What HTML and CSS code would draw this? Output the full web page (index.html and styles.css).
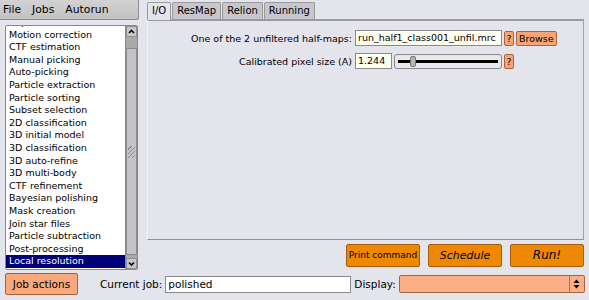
FILE: index.html
```html
<!DOCTYPE html>
<html lang="en">
<head>
    <meta charset="UTF-8">
    <title>RELION</title>
    <link rel="stylesheet" href="styles.css">
</head>
<body>
    <div class="main">
        <div class="left">
            <div class="menubar">
                <span class="menu-item">File</span>
                <span class="menu-item">Jobs</span>
                <span class="menu-item">Autorun</span>
            </div>
            <div class="browser">
                <div class="browser-list">
                    <div class="job">Import</div>
                    <div class="job">Motion correction</div>
                    <div class="job">CTF estimation</div>
                    <div class="job">Manual picking</div>
                    <div class="job">Auto-picking</div>
                    <div class="job">Particle extraction</div>
                    <div class="job">Particle sorting</div>
                    <div class="job">Subset selection</div>
                    <div class="job">2D classification</div>
                    <div class="job">3D initial model</div>
                    <div class="job">3D classification</div>
                    <div class="job">3D auto-refine</div>
                    <div class="job">3D multi-body</div>
                    <div class="job">CTF refinement</div>
                    <div class="job">Bayesian polishing</div>
                    <div class="job">Mask creation</div>
                    <div class="job">Join star files</div>
                    <div class="job">Particle subtraction</div>
                    <div class="job">Post-processing</div>
                    <div class="job selected">Local resolution</div>
                </div>
                <div class="scrollbar">
                    <div class="arrow">
                        <svg width="9" height="9" viewBox="0 0 9 9"><polyline points="2,6 4.5,3.5 7,6" fill="none" stroke="#000" stroke-width="1.6"/></svg>
                    </div>
                    <div class="track">
                        <div class="thumb"><span class="grip"></span></div>
                    </div>
                    <div class="arrow">
                        <svg width="9" height="9" viewBox="0 0 9 9"><polyline points="2,3.5 4.5,6 7,3.5" fill="none" stroke="#000" stroke-width="1.6"/></svg>
                    </div>
                </div>
            </div>
        </div>
        <div class="right">
            <div class="tabs">
                <span class="tab active">I/O</span>
                <span class="tab">ResMap</span>
                <span class="tab">Relion</span>
                <span class="tab">Running</span>
            </div>
            <div class="panel">
                <div class="row">
                    <span class="label">One of the 2 unfiltered half-maps:</span>
                    <span class="input file">run_half1_class001_unfil.mrc</span>
                    <span class="help">?</span>
                    <span class="small-btn">Browse</span>
                </div>
                <div class="row">
                    <span class="label">Calibrated pixel size (A)</span>
                    <span class="input num">1.244</span>
                    <span class="slider"><span class="line"></span><span class="knob"></span></span>
                    <span class="help">?</span>
                </div>
            </div>
            <div class="actions">
                <span class="big-btn print">Print command</span>
                <span class="big-btn italic">Schedule</span>
                <span class="big-btn italic run">Run!</span>
            </div>
        </div>
    </div>
    <div class="bottom">
        <span class="job-actions">Job actions</span>
        <span class="bottom-label">Current job:</span>
        <span class="input current">polished</span>
        <span class="bottom-label display">Display:</span>
        <span class="choice">
            <span class="updown">
                <svg width="7" height="10" viewBox="0 0 7 10"><polygon points="0.5,4 3.5,0.5 6.5,4" fill="#000"/><polygon points="0.5,6 3.5,9.5 6.5,6" fill="#000"/></svg>
            </span>
        </span>
    </div>
</body>
</html>
```

FILE: styles.css
```css
body {
    margin: 0;
    width: 589px;
    height: 300px;
    overflow: hidden;
    background-color: #e4e4ec;
    font-family: "DejaVu Sans", sans-serif;
    font-size: 9.5px;
    color: #000000;
}
.main {
    display: flex;
    height: 271px;
}
.left {
    width: 147px;
    display: flex;
    flex-direction: column;
}
.menubar {
    height: 20px;
    width: 139px;
    box-sizing: border-box;
    display: flex;
    align-items: center;
    gap: 11px;
    padding-left: 3px;
    background: linear-gradient(#d2d2d2, #c2c2c2);
    border-right: 1px solid #8c8c8c;
    border-bottom: 1px solid #8c8c8c;
    border-bottom-right-radius: 3px;
    font-size: 10.8px;
}
.browser {
    margin: 5px 0 0 5px;
    width: 133px;
    height: 245px;
    box-sizing: border-box;
    border: 1px solid #8a8a8a;
    border-radius: 2px;
    background-color: #ffffff;
    display: flex;
    overflow: hidden;
}
.browser-list {
    flex: 1;
    padding-top: 1px;
    margin-top: -11px;
}
.job {
    height: 12.6px;
    line-height: 12.6px;
    padding-left: 3px;
    white-space: nowrap;
}
.job.selected {
    background-color: #000078;
    color: #ffffff;
    margin-right: -12px;
}
.scrollbar {
    width: 11px;
    display: flex;
    flex-direction: column;
    background-color: #a9a9ad;
    border-left: 1px solid #8a8a8a;
    position: relative;
    z-index: 1;
}
.arrow {
    height: 11px;
    background-color: #c8c8cc;
    border: 1px solid #909090;
    box-sizing: border-box;
    display: flex;
    align-items: center;
    justify-content: center;
}
.track {
    flex: 1;
    padding-top: 11px;
    padding-bottom: 3px;
    display: flex;
}
.thumb {
    flex: 1;
    background-color: #c4c4c8;
    border: 1px solid #8a8a8a;
    display: flex;
    align-items: center;
    justify-content: center;
}
.grip {
    width: 7px;
    height: 12px;
    background: repeating-linear-gradient(135deg, transparent 0 2px, #8c8c8c 2px 3px);
}
.right {
    flex: 1;
    display: flex;
    flex-direction: column;
    padding-right: 5px;
}
.tabs {
    display: flex;
    margin-top: 2px;
    height: 17px;
}
.tab {
    padding: 0 4px;
    line-height: 16px;
    font-size: 10px;
    background-color: #c6c6cc;
    border: 1px solid #9a9a9a;
    border-bottom: none;
    border-radius: 2px 2px 0 0;
    margin-right: 1px;
}
.tab.active {
    background-color: #e4e4ec;
    height: 17px;
    position: relative;
    z-index: 1;
}
.panel {
    height: 221px;
    box-sizing: border-box;
    border: 1px solid #a0a0a8;
    border-top: 2px solid #9a9a9e;
    border-left-color: #f4f4f8;
    border-bottom-color: #8e8e96;
    display: flex;
    flex-direction: column;
    gap: 7px;
    padding-top: 9px;
}
.row {
    display: flex;
    align-items: center;
    height: 16px;
}
.label {
    width: 204px;
    text-align: right;
    padding-right: 3px;
}
.input {
    box-sizing: border-box;
    height: 16px;
    line-height: 14px;
    border: 1px solid #8a8a8a;
    background-color: #fffff0;
    padding-left: 2px;
    white-space: nowrap;
    overflow: hidden;
}
.file {
    width: 147px;
}
.num {
    width: 37px;
}
.help {
    width: 10px;
    height: 15px;
    box-sizing: border-box;
    margin-left: 2px;
    background-color: #f7a477;
    border: 1px solid #a8643c;
    border-radius: 2px;
    text-align: center;
    line-height: 13px;
}
.small-btn {
    height: 15px;
    box-sizing: border-box;
    margin-left: 2px;
    padding: 0 2px;
    background-color: #f7a477;
    border: 1px solid #a8643c;
    border-radius: 2px;
    line-height: 13px;
}
.slider {
    position: relative;
    width: 108px;
    height: 15px;
    margin-left: 2px;
    box-sizing: border-box;
    border: 1px solid #8a8a8a;
    border-radius: 3px;
    background-color: #e8e8ee;
}
.line {
    position: absolute;
    left: 3px;
    right: 3px;
    top: 5px;
    height: 3px;
    background-color: #000000;
}
.knob {
    position: absolute;
    left: 15px;
    top: 1px;
    width: 6px;
    height: 11px;
    box-sizing: border-box;
    background-color: #b4b4b8;
    border: 1px solid #777777;
    border-radius: 2px;
}
.actions {
    display: flex;
    justify-content: flex-end;
    gap: 8px;
    margin-top: 4px;
}
.big-btn {
    width: 74px;
    height: 23px;
    box-sizing: border-box;
    background-color: #ee8800;
    border: 1px solid #a85c10;
    border-radius: 2px;
    text-align: center;
    line-height: 21px;
    font-size: 11px;
}
.print {
    font-size: 9px;
}
.italic {
    font-style: italic;
}
.run {
    font-size: 12px;
}
.bottom {
    display: flex;
    align-items: center;
    height: 26px;
}
.job-actions {
    margin-left: 5px;
    width: 73px;
    height: 22px;
    box-sizing: border-box;
    background-color: #f8a87a;
    border: 1px solid #a8643c;
    border-radius: 2px;
    text-align: center;
    line-height: 20px;
    font-size: 10.5px;
}
.bottom-label {
    margin-left: 22px;
    margin-right: 3px;
    font-size: 10.5px;
}
.current {
    width: 186px;
    height: 17px;
    background-color: #ffffff;
    font-size: 10.5px;
}
.bottom-label.display {
    margin-left: 3px;
}
.choice {
    width: 186px;
    height: 18px;
    box-sizing: border-box;
    background-color: #fcae86;
    border: 1px solid #a8643c;
    border-radius: 2px;
    display: flex;
    justify-content: flex-end;
}
.updown {
    width: 14px;
    border-left: 1px solid #b07050;
    display: flex;
    align-items: center;
    justify-content: center;
}
```
